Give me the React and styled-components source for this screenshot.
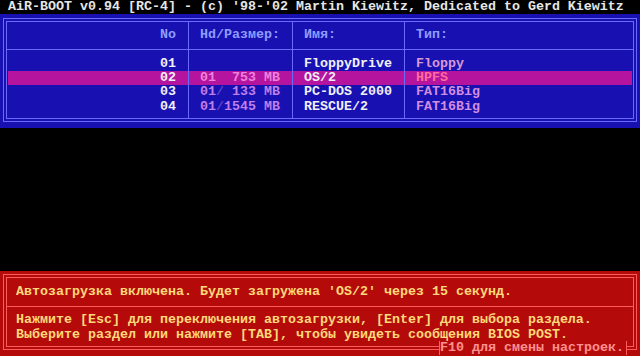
import React from 'react';
import styled, { createGlobalStyle } from 'styled-components';

const ROW = '14.24px';
const BLUE = '#1810b0';
const BLUE_LINE = '#6a6afc';
const RED = '#b40a0a';
const RED_LINE = '#ff5c5c';
const HILITE = '#b4149e';

const Global = createGlobalStyle`
  html, body {
    margin: 0;
    padding: 0;
    background: #000;
  }
`;

const Screen = styled.div`
  width: 640px;
  height: 356px;
  background: #000;
  display: flex;
  flex-direction: column;
  overflow: hidden;
  font-family: "Liberation Mono", "DejaVu Sans Mono", monospace;
  font-weight: bold;
  font-size: 13.333px;
  line-height: ${ROW};
`;

const TitleBar = styled.div`
  height: ${ROW};
  padding-left: 8px;
  color: #e6e6e6;
  white-space: pre;
`;

const Panel = styled.section`
  height: calc(${ROW} * ${props => props.$rows});
  background: ${props => props.$bg};
  padding: 3.5px 3px 6px;
  box-sizing: border-box;
  display: flex;
  flex: none;
`;

const Frame = styled.div`
  flex: 1;
  position: relative;
  display: flex;
  flex-direction: column;
  padding: 3px;
  border: 1px solid ${props => props.$line};
  box-shadow: inset 0 0 0 2px ${props => props.$bg}, inset 0 0 0 3px ${props => props.$line};
`;

const Gap = styled.div`
  height: 6.74px;
  flex: none;
`;

const Row = styled.div`
  display: grid;
  grid-template-columns: 180px 104px 112px 1fr;
  height: ${props => props.$h || ROW};
  flex: ${props => (props.$grow ? 1 : 'none')};
  padding: 0 1px;
  background: ${props => (props.$hl ? HILITE : 'transparent')};
  background-clip: content-box;
`;

const RuleRow = styled(Row)`
  background: linear-gradient(${BLUE_LINE}, ${BLUE_LINE}) center / 100% 1px no-repeat;
`;

const Cell = styled.div`
  white-space: pre;
  color: ${props => props.$color || '#f0f0f8'};
  text-align: ${props => (props.$first ? 'right' : 'left')};
  padding: ${props => (props.$first ? '0 12px 0 0' : '0 0 0 11px')};
  border-left: ${props => (props.$first ? 'none' : `1px solid ${BLUE_LINE}`)};
`;

const Slash = styled.span`
  color: ${props => props.$color};
`;

const Line = styled.div`
  height: ${ROW};
  flex: none;
  padding-left: 9px;
  white-space: pre;
  color: #ffd878;
`;

const RedRule = styled.div`
  height: ${ROW};
  flex: none;
  background: linear-gradient(${RED_LINE}, ${RED_LINE}) center / 100% 1px no-repeat;
`;

const Filler = styled.div`
  flex: 1;
`;

const HotkeyTab = styled.div`
  position: absolute;
  right: 9px;
  bottom: -6px;
  height: 14px;
  line-height: 14px;
  padding-right: 2px;
  background: ${RED};
  border-left: 1px solid ${RED_LINE};
  border-right: 1px solid ${RED_LINE};
  color: #ff9090;
  white-space: pre;
`;

const HEAD = '#8e9cff';

const partitions = [
  { no: '01', size: null, name: 'FloppyDrive', type: 'Floppy', typeColor: '#d898d8' },
  { no: '02', size: '753', name: 'OS/2', type: 'HPFS', typeColor: '#ff6a9c', hl: true },
  { no: '03', size: '133', name: 'PC-DOS 2000', type: 'FAT16Big', typeColor: '#d48ce0' },
  { no: '04', size: '1545', name: 'RESCUE/2', type: 'FAT16Big', typeColor: '#d48ce0' },
];

function EmptyCells() {
  return (
    <>
      <Cell $first />
      <Cell />
      <Cell />
      <Cell />
    </>
  );
}

function PartitionRow({ p }) {
  const sizeColor = p.hl ? '#ec80dc' : '#c07ee8';
  return (
    <Row $hl={p.hl}>
      <Cell $first>{p.no}</Cell>
      <Cell $color={sizeColor}>
        {p.size && (
          <>
            01<Slash $color={p.hl ? HILITE : '#5a44c8'}>/</Slash>
            {p.size.padStart(4, ' ')} MB
          </>
        )}
      </Cell>
      <Cell>{p.name}</Cell>
      <Cell $color={p.typeColor}>{p.type}</Cell>
    </Row>
  );
}

export default function App() {
  return (
    <Screen>
      <Global />
      <TitleBar>AiR-BOOT v0.94 [RC-4] - (c) '98-'02 Martin Kiewitz, Dedicated to Gerd Kiewitz</TitleBar>

      <Panel $rows={8} $bg={BLUE}>
        <Frame $bg={BLUE} $line={BLUE_LINE}>
          <Row $h="6.74px"><EmptyCells /></Row>
          <Row>
            <Cell $first $color={HEAD}>No</Cell>
            <Cell $color={HEAD}>Hd/Размер:</Cell>
            <Cell $color={HEAD}>Имя:</Cell>
            <Cell $color={HEAD}>Тип:</Cell>
          </Row>
          <RuleRow><EmptyCells /></RuleRow>
          {partitions.map(p => <PartitionRow key={p.no} p={p} />)}
          <Row $grow><EmptyCells /></Row>
        </Frame>
      </Panel>

      <Filler />

      <Panel $rows={6} $bg={RED}>
        <Frame $bg={RED} $line={RED_LINE}>
          <Gap />
          <Line>Автозагрузка включена. Будет загружена 'OS/2' через 15 секунд.</Line>
          <RedRule />
          <Line>Нажмите [Esc] для переключения автозагрузки, [Enter] для выбора раздела.</Line>
          <Line>Выберите раздел или нажмите [TAB], чтобы увидеть сообщения BIOS POST.</Line>
          <HotkeyTab>F10 для смены настроек.</HotkeyTab>
        </Frame>
      </Panel>
    </Screen>
  );
}
